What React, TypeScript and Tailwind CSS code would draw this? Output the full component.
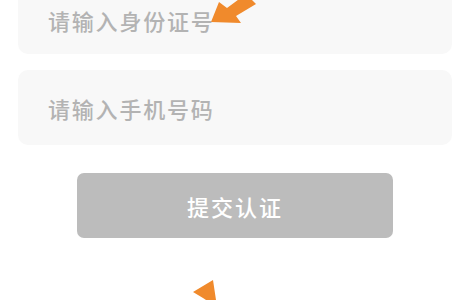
import React from "react";

const font = { fontFamily: '"Noto Sans CJK SC", "Noto Sans", sans-serif' };

export default function App() {
  return (
    <div className="relative w-[468px] h-[300px] overflow-hidden bg-white" style={font}>
      <div className="flex flex-col px-[18px] pr-[16px]">
        <div className="mt-[-16px] h-[70px] rounded-[10px] bg-[#f8f8f8] flex items-center pl-[30px] pt-[2px]">
          <span className="text-[22px] font-medium leading-none tracking-[1.8px] text-[#b3b3b3]">请输入身份证号</span>
        </div>
        <div className="mt-[16px] h-[75px] rounded-[10px] bg-[#f8f8f8] flex items-center pl-[30px]">
          <span className="text-[22px] font-medium leading-none tracking-[1.8px] text-[#b3b3b3]">请输入手机号码</span>
        </div>
      </div>
      <div className="flex justify-center mt-[28px] pl-[2px]">
        <div className="w-[316px] h-[65px] rounded-[7px] bg-[#bcbcbc] flex items-center justify-center">
          <span className="text-[22px] font-medium leading-none tracking-[2px] text-white">提交认证</span>
        </div>
      </div>
      <svg className="absolute left-0 top-0" width="468" height="300" viewBox="0 0 468 300">
        <polygon points="211,22 219,2 227,8 246,-6 256,4 236,16 241,23" fill="#f08a2c" />
        <polygon points="213,280 216,300 206,300 203,298 193,292" fill="#f08a2c" />
      </svg>
    </div>
  );
}
